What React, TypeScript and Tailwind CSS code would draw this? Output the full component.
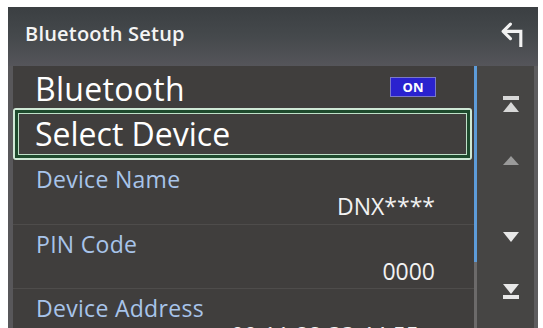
import React from "react";

const font = { fontFamily: '"Open Sans", "Noto Sans", sans-serif' };

function TopJump() {
  return (
    <svg width="18" height="17" viewBox="0 0 18 17">
      <rect x="1" y="0" width="16" height="4" fill="#d8d8d8" />
      <polygon points="9,6 17,16 1,16" fill="#d8d8d8" />
    </svg>
  );
}
function Up() {
  return (
    <svg width="18" height="11" viewBox="0 0 18 11">
      <polygon points="9,1 17,10 1,10" fill="#9a9a9a" />
    </svg>
  );
}
function Down() {
  return (
    <svg width="18" height="12" viewBox="0 0 18 12">
      <polygon points="1,1 17,1 9,11" fill="#e8e8e8" />
    </svg>
  );
}
function BottomJump() {
  return (
    <svg width="18" height="17" viewBox="0 0 18 17">
      <polygon points="1,1 17,1 9,11" fill="#e8e8e8" />
      <rect x="1" y="12" width="16" height="4" fill="#e8e8e8" />
    </svg>
  );
}

export default function App() {
  return (
    <div
      className="w-[543px] h-[328px] bg-white pl-[8px] pr-[5px] pt-[7px] overflow-hidden"
      style={font}
    >
      <div className="h-[400px] flex flex-col bg-[#403e3d]">
        {/* Header */}
        <div className="h-[59px] shrink-0 flex items-center justify-between pl-[17px] pr-[12px] bg-gradient-to-b from-[#3b3f42] via-[#45494c] to-[#55555a]">
          <span className="text-[20px] font-semibold text-[#f4f4f4] tracking-[0.2px] -mt-[6px]">
            Bluetooth Setup
          </span>
          <svg width="27" height="27" viewBox="0 0 26 26" className="-mt-[5px]">
            <path
              d="M21 25 V10 H5"
              stroke="#f2f2f2"
              strokeWidth="3"
              fill="none"
              strokeLinejoin="miter"
            />
            <path
              d="M11 3 L4 10 L11 17"
              stroke="#f2f2f2"
              strokeWidth="3"
              fill="none"
              strokeLinecap="round"
              strokeLinejoin="round"
            />
          </svg>
        </div>

        {/* Body */}
        <div className="flex flex-1">
          <div className="w-[5px] bg-[#58575a]" />
          {/* List */}
          <div className="w-[461px] flex flex-col">
            <div className="h-[42px] flex items-center justify-between pl-[22px] pr-[38px]">
              <span className="text-[32px] text-white leading-none mt-[3px] tracking-[0.3px]">Bluetooth</span>
              <span className="w-[46px] h-[20px] flex items-center justify-center bg-[#2a22cf] border border-[#7a78c8] text-[13px] font-bold text-white leading-none">
                ON
              </span>
            </div>
            <div className="h-[52px] mr-[2px] border-2 border-[#cfe8d6] rounded-[3px]">
              <div className="h-full border-[3px] border-[#1e4a2d]">
                <div className="h-full border-[1.5px] border-[#bfe0c8] flex items-center pl-[16px]">
                  <span className="text-[32px] text-white leading-none">Select Device</span>
                </div>
              </div>
            </div>
            <div className="h-[65px] border-b border-[#4e4c4b] flex flex-col pl-[23px] pr-[39px] pt-[6px]">
              <span className="text-[23px] text-[#a8c4ea] leading-[26px] tracking-[0.3px]">
                Device Name
              </span>
              <span className="self-end text-[23px] text-[#f2f2f2] leading-[26px] mt-[1px]">
                DNX****
              </span>
            </div>
            <div className="h-[64px] border-b border-[#4e4c4b] flex flex-col pl-[23px] pr-[39px] pt-[6px]">
              <span className="text-[23px] text-[#a8c4ea] leading-[26px] tracking-[0.3px]">
                PIN Code
              </span>
              <span className="self-end text-[23px] text-[#f2f2f2] leading-[26px] mt-[1px]">
                0000
              </span>
            </div>
            <div className="h-[64px] flex flex-col pl-[23px] pr-[55px] pt-[6px]">
              <span className="text-[23px] text-[#a8c4ea] leading-[26px] tracking-[0.3px]">
                Device Address
              </span>
              <span className="self-end text-[23px] text-[#f2f2f2] leading-[26px] mt-[1px]">
                00:11:22:33:44:55
              </span>
            </div>
          </div>
          {/* Scroll line */}
          <div className="w-[3px] flex flex-col">
            <div className="h-[196px] bg-[#5d9bd9]" />
            <div className="flex-1 bg-[#6c6a6a]" />
          </div>
          {/* Scroll buttons column */}
          <div className="w-[57px] bg-[#464544] flex flex-col pl-[25px] pt-[30px]">
            <TopJump />
            <div className="mt-[42px]">
              <Up />
            </div>
            <div className="mt-[65px]">
              <Down />
            </div>
            <div className="mt-[40px]">
              <BottomJump />
            </div>
          </div>
          <div className="w-[4px] bg-[#5e5d5f]" />
        </div>
      </div>
    </div>
  );
}
